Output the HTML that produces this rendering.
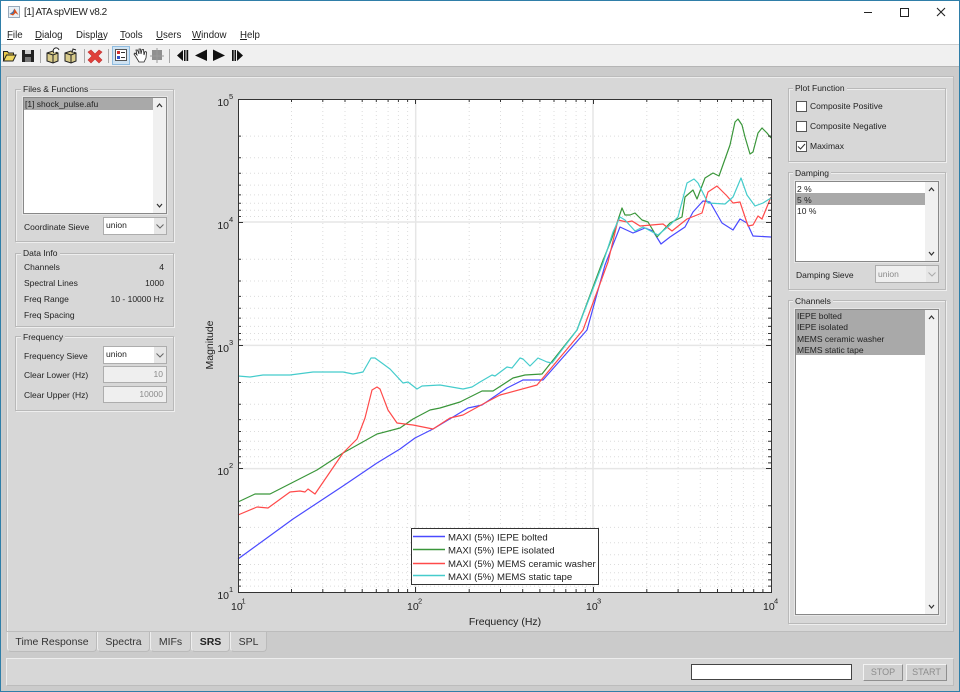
<!DOCTYPE html>
<html lang="en"><head><meta charset="utf-8"><title>[1] ATA spVIEW v8.2</title>
<style>
html,body{margin:0;padding:0;background:#fff}
#w{position:relative;width:960px;height:692px;overflow:hidden;background:#cbcbcb;font:8.5px/11px "Liberation Sans",Arial,sans-serif;color:#222}
#w div,#w span.a{position:absolute;box-sizing:border-box}
.t{white-space:nowrap;position:absolute}
.p{background:#d7d7d7;border:1px solid #b9b9b9;box-shadow:inset 1px 1px 0 #eee,1px 1px 0 #eee}
.lg{position:absolute;background:#d7d7d7;padding:0 2px;white-space:nowrap;line-height:10px}
.box{background:#fff;border:1px solid #888;box-shadow:0 0 0 1px #e6e6e6}
.sb{background:#f0f0f0}
.sel{background:#a9a9a9}
.dis{background:#efefef;border:1px solid #adadad;color:#8a8a8a;text-align:right;padding-right:3px;line-height:14px}
.dd{background:#fff;border:1px solid #adadad;padding-left:2px;line-height:15px}
.arr{background:#e6e6e6}
.cb{background:#fff;border:1px solid #555;width:11px;height:11px}
.m{font-size:9.7px;line-height:12px;top:30px}
.tab{top:632px;height:20px;background:#d4d4d4;border:1px solid #bbb;border-top:0;border-left-color:#eee;border-radius:0 0 4px 4px;text-align:center;font-size:10.5px;line-height:20px;color:#333}
.btn{background:#d0d0d0;border:1px solid #8f8f8f;border-top-color:#f2f2f2;border-left-color:#f2f2f2;color:#8c8c8c;text-align:center;line-height:15px;font-size:9px}
</style></head><body>
<div id="w">
<!-- window chrome -->
<div style="left:0;top:0;width:960px;height:28px;background:#fff;border-top:1px solid #2f7ea8"></div>
<div style="left:0;top:28px;width:960px;height:16px;background:#fff"></div>
<div style="left:0;top:44px;width:960px;height:1px;background:#cfcfcf"></div>
<div style="left:0;top:45px;width:960px;height:21px;background:#f0f0f0"></div>
<div style="left:0;top:66px;width:960px;height:1px;background:#b5b5b5"></div>
<div style="left:0;top:1px;width:1px;height:691px;background:#2f7ea8"></div>
<div style="left:959px;top:1px;width:1px;height:691px;background:#2f7ea8"></div>
<div style="left:0;top:691px;width:960px;height:1px;background:#2f7ea8"></div>

<svg style="position:absolute;left:8px;top:6px" width="12" height="12" viewBox="0 0 12 12"><rect x=".5" y=".5" width="11" height="11" fill="#e8f0f6" stroke="#9ab"/><path d="M1.500 8L4.500 6L6.500 2.500L9 6.500L10.500 9L7.500 7L5 9.500Z" fill="#d9501e"/><path d="M1.500 8L4.500 6L6.500 2.500L5.500 7.500L3.500 8Z" fill="#3a78b5"/></svg>
<span class="t" style="left:24px;top:6px;font-size:10px;letter-spacing:-.45px;line-height:13px;color:#222">[1] ATA spVIEW v8.2</span>
<svg style="position:absolute;left:860px;top:0" width="100" height="24" viewBox="0 0 100 24" fill="none" stroke="#222"><path d="M4 12.500H12"/><rect x="40.500" y="8.500" width="8" height="8"/><path d="M77 8l8 8M85 8l-8 8" stroke-width="1.100"/></svg>

<span class="t m" style="left:7px"><u>F</u>ile</span>
<span class="t m" style="left:35px"><u>D</u>ialog</span>
<span class="t m" style="left:76px">Displ<u>a</u>y</span>
<span class="t m" style="left:120px"><u>T</u>ools</span>
<span class="t m" style="left:156px"><u>U</u>sers</span>
<span class="t m" style="left:192px"><u>W</u>indow</span>
<span class="t m" style="left:240px"><u>H</u>elp</span>

<!-- toolbar -->
<svg style="position:absolute;left:0;top:45px" width="260" height="21" viewBox="0 0 260 21">
<path d="M3.500 16V6.500h4l1 1.500h5v2" fill="#e8c84a" stroke="#222"/><path d="M3.500 16l3-6h9.500l-3 6z" fill="#f0d860" stroke="#222"/>
<rect x="22" y="5" width="12" height="12" fill="#222"/><rect x="25" y="5" width="6" height="4" fill="#ccc"/><rect x="25" y="12" width="6" height="5" fill="#777"/>
<path d="M40.500 4v14M84.500 4v14M108.500 4v14M169.500 4v14" stroke="#a8a8a8"/>
<path d="M47 8l6-2 5 2v8l-5 2-6-2z" fill="#d9cc8c" stroke="#222"/><path d="M47 8l6 2 5-2M53 10v8" fill="none" stroke="#222"/><path d="M54 8a3 3 0 1 1 5-3" fill="#fff" stroke="#222"/>
<path d="M65 8l6-2 5 2v8l-5 2-6-2z" fill="#d9cc8c" stroke="#222"/><path d="M65 8l6 2 5-2M71 10v8" fill="none" stroke="#222"/><path d="M72 8l1-4 3 1" fill="#fff" stroke="#222"/>
<path d="M91 5l4 4 4-4 3 2-4 4 4 4-3 3-4-4-4 4-3-3 4-4-4-4z" fill="#e0403a" stroke="#c03030" stroke-width=".6"/>
<rect x="112.500" y="1.500" width="17" height="18" fill="#cfe3f3" stroke="#8fbce0"/>
<rect x="115.500" y="4.500" width="11" height="11" fill="#fff" stroke="#555"/><rect x="117" y="6" width="3" height="3" fill="#d03030"/><rect x="117" y="11" width="3" height="3" fill="#3050c8"/><path d="M121 7.500h4M121 12.500h4" stroke="#333"/>
<path d="M136 12l-2-3 1-1 2 2-1-5 1.500 0 1.500 4V4h1.500l.5 5 1-4.500h1.500L144 10l1-3.500 1.500.5L146 13l-2 4h-5z" fill="#fff" stroke="#222" stroke-width=".8"/>
<rect x="152" y="5" width="10" height="10" fill="#909090"/><path d="M157 3v15M150 11h14" stroke="#9a9a9a"/>
<path d="M177 10.500l6-5.500v11z" fill="#111"/><rect x="184" y="5" width="1.500" height="11" fill="#111"/><rect x="186.500" y="5" width="1.700" height="11" fill="#111"/>
<path d="M195 10.500l12-6v11.500z" fill="#111"/><path d="M225 10.500l-12-6v11.500z" fill="#111"/>
<rect x="232" y="5" width="1.700" height="11" fill="#111"/><rect x="234.500" y="5" width="1.500" height="11" fill="#111"/><path d="M243 10.500l-6-5.500v11z" fill="#111"/>
</svg>

<!-- main panel -->
<div style="left:6px;top:76px;width:948px;height:556px;background:#d7d7d7;border:1px solid #bcbcbc;box-shadow:inset 1px 1px 0 #ededed"></div>

<!-- Files & Functions -->
<div class="p" style="left:15px;top:89px;width:159px;height:153px"></div>
<span class="lg" style="left:21px;top:84px">Files &amp; Functions</span>
<div class="box" style="left:23px;top:97px;width:144px;height:117px"></div>
<div class="sel" style="left:24px;top:98px;width:129px;height:12px"></div>
<span class="t" style="left:25px;top:99px">[1] shock_pulse.afu</span>
<div class="sb" style="left:153px;top:98px;width:13px;height:115px"></div>
<svg style="position:absolute;left:153px;top:98px" width="13" height="115" fill="none" stroke="#333" stroke-width="1.200"><path d="M4 9l2.500-3 2.500 3M4 106l2.500 3 2.500-3"/></svg>
<span class="t" style="left:24px;top:222px">Coordinate Sieve</span>
<div class="dd" style="left:103px;top:217px;width:64px;height:18px">union</div>
<div class="arr" style="left:154px;top:218px;width:12px;height:16px"></div>
<svg style="position:absolute;left:154px;top:218px" width="12" height="16" fill="none" stroke="#666"><path d="M2.500 6.500l3.500 3.500 3.500-3.500"/></svg>

<!-- Data Info -->
<div class="p" style="left:15px;top:253px;width:159px;height:74px"></div>
<span class="lg" style="left:21px;top:248px">Data Info</span>
<span class="t" style="left:24px;top:262px">Channels</span><span class="t" style="right:796px;top:262px">4</span>
<span class="t" style="left:24px;top:278px">Spectral Lines</span><span class="t" style="right:796px;top:278px">1000</span>
<span class="t" style="left:24px;top:294px">Freq Range</span><span class="t" style="right:796px;top:294px">10 - 10000 Hz</span>
<span class="t" style="left:24px;top:310px">Freq Spacing</span>

<!-- Frequency -->
<div class="p" style="left:15px;top:336px;width:159px;height:75px"></div>
<span class="lg" style="left:21px;top:332px">Frequency</span>
<span class="t" style="left:24px;top:351px">Frequency Sieve</span>
<div class="dd" style="left:103px;top:346px;width:64px;height:18px">union</div>
<div class="arr" style="left:154px;top:347px;width:12px;height:16px"></div>
<svg style="position:absolute;left:154px;top:347px" width="12" height="16" fill="none" stroke="#666"><path d="M2.500 6.500l3.500 3.500 3.500-3.500"/></svg>
<span class="t" style="left:24px;top:370px">Clear Lower (Hz)</span>
<div class="dis" style="left:103px;top:366px;width:64px;height:17px">10</div>
<span class="t" style="left:24px;top:390px">Clear Upper (Hz)</span>
<div class="dis" style="left:103px;top:386px;width:64px;height:17px">10000</div>

<!-- Plot -->
<svg style="position:absolute;left:0;top:0" width="960" height="692" viewBox="0 0 960 692" font-family="Liberation Sans,Arial,sans-serif" fill="#222">
<defs>
<g id="xm" stroke="#dcdcdc" stroke-dasharray="1 3" fill="none"><path d="M53.500 99V592M84.800 99V592M107 99V592M124.200 99V592M138.300 99V592M150.100 99V592M160.400 99V592M169.600 99V592"/></g>
<g id="ym" stroke="#dcdcdc" stroke-dasharray="1 3" fill="none"><path d="M238 37.100H771M238 58.800H771M238 74.200H771M238 86.100H771M238 95.900H771M238 104.200H771M238 111.300H771M238 117.500H771"/></g>
<path id="xt" d="M53.500 0v3M84.800 0v3M107 0v3M124.200 0v3M138.300 0v3M150.100 0v3M160.400 0v3M169.600 0v3" stroke="#333" fill="none"/>
<path id="yt" d="M0 37.100h3M0 58.800h3M0 74.200h3M0 86.100h3M0 95.900h3M0 104.200h3M0 111.300h3M0 117.500h3" stroke="#333" fill="none"/>
</defs>
<rect x="238" y="99" width="533" height="493" fill="#fff"/>
<use href="#xm" x="238"/><use href="#xm" x="415.700"/><use href="#xm" x="593.300"/>
<use href="#ym" y="99"/><use href="#ym" y="222.200"/><use href="#ym" y="345.400"/><use href="#ym" y="468.600"/>
<path d="M415.700 99V592M593 99V592M238 222H771M238 345.400H771M238 468.600H771" stroke="#e6e6e6" stroke-width="1.500" fill="none"/>

<g fill="none" stroke-width="1.200" stroke-linejoin="round">
<polyline stroke="#4a4aff" points="238,559 293,519 343,486 377,463 400,449 415,438 433,429 468,408 482,405 507,388 523,380 543,380 587,330 605,265 620,227 633,233 645,228 653,231 661,244 670,237 685,227 693,212 703,201 710,202 722,223 733,230 740,219 747,223 753,236 771,237"/>
<polyline stroke="#3a963a" points="238,502 255,494 270,494 317,470 343,453 377,434 400,428 413,419 430,410 440,408 460,402 482,391 493,391 513,378 525,375 542,374 577,330 602,263 612,238 622,208 625,215 630,215 635,213 642,220 648,222 657,237 670,223 682,217 685,197 693,190 697,199 705,178 713,173 719,176 730,145 735,122 738,119 742,125 745,137 750,154 753,152 758,133 762,128 767,133 771,138"/>
<polyline stroke="#ff4a4a" points="238,515 257,507 268,508 290,492 300,491 305,492 308,489 315,494 343,453 357,439 365,418 372,390 377,387 380,389 388,410 397,423 413,425 433,429 450,418 463,415 483,404 500,395 537,385 583,330 608,262 618,220 627,222 632,221 640,226 663,224 672,231 687,219 702,213 708,192 717,186 727,196 733,203 740,202 748,226 753,225 758,216 762,219 771,197"/>
<polyline stroke="#45cccc" points="238,376 250,377 263,375 290,375 313,372 343,372 353,374 363,372 371,358 375,358 390,369 403,383 408,382 417,389 422,386 440,385 463,389 472,387 480,382 492,375 495,376 507,367 512,368 520,358 523,359 530,366 538,358 547,362 552,363 577,330 603,263 613,232 620,217 625,220 635,231 643,227 658,235 670,225 678,217 687,183 694,179 698,183 708,203 725,204 733,197 741,178 747,195 755,206 763,203 771,198"/>
</g>

<use href="#xt" x="238" y="99"/><use href="#xt" x="415.700" y="99"/><use href="#xt" x="593.300" y="99"/>
<use href="#xt" x="238" y="589"/><use href="#xt" x="415.700" y="589"/><use href="#xt" x="593.300" y="589"/>
<use href="#yt" x="238" y="99"/><use href="#yt" x="238" y="222.200"/><use href="#yt" x="238" y="345.400"/><use href="#yt" x="238" y="468.600"/>
<use href="#yt" x="768" y="99"/><use href="#yt" x="768" y="222.200"/><use href="#yt" x="768" y="345.400"/><use href="#yt" x="768" y="468.600"/>
<path d="M415.500 99v5M593.500 99v5M415.500 592v-5M593.500 592v-5M238 222.500h5M238 345.500h5M238 468.500h5M771 222.500h-5M771 345.500h-5M771 468.500h-5" stroke="#333" fill="none"/>
<rect x="238.500" y="99.500" width="533" height="493" fill="none" stroke="#333"/>

<g font-size="10.500" text-anchor="end">
<text x="229" y="106">10</text><text x="229" y="229">10</text><text x="229" y="352">10</text><text x="229" y="475">10</text><text x="229" y="599">10</text>
</g>
<g font-size="7.500">
<text x="229" y="99">5</text><text x="229" y="222">4</text><text x="229" y="345">3</text><text x="229" y="468">2</text><text x="229" y="592">1</text>
</g>
<g font-size="10.500">
<text x="231" y="610">10</text><text x="407" y="610">10</text><text x="586" y="610">10</text><text x="763" y="610">10</text>
</g>
<g font-size="7.500">
<text x="241.500" y="603.500">1</text><text x="418" y="603.500">2</text><text x="597" y="603.500">3</text><text x="774" y="603.500">4</text>
</g>
<text x="505" y="625" font-size="10.500" text-anchor="middle">Frequency (Hz)</text>
<text transform="translate(213 345) rotate(-90)" font-size="10.500" text-anchor="middle">Magnitude</text>

<rect x="411.500" y="528.500" width="187" height="56" fill="#fff" stroke="#333"/>
<g stroke-width="1.500">
<path d="M413 536.500H445" stroke="#4a4aff"/><path d="M413 549.500H445" stroke="#3a963a"/><path d="M413 563.500H445" stroke="#ff4a4a"/><path d="M413 575.500H445" stroke="#45cccc"/>
</g>
<g font-size="9.600">
<text x="448" y="540.500">MAXI (5%) IEPE bolted</text>
<text x="448" y="553.500">MAXI (5%) IEPE isolated</text>
<text x="448" y="567">MAXI (5%) MEMS ceramic washer</text>
<text x="448" y="580">MAXI (5%) MEMS static tape</text>
</g>
</svg>

<!-- Plot Function -->
<div class="p" style="left:788px;top:88px;width:158px;height:74px"></div>
<span class="lg" style="left:793px;top:83px">Plot Function</span>
<div class="cb" style="left:796px;top:101px"></div><span class="t" style="left:810px;top:101px">Composite Positive</span>
<div class="cb" style="left:796px;top:121px"></div><span class="t" style="left:810px;top:121px">Composite Negative</span>
<div class="cb" style="left:796px;top:141px"></div><span class="t" style="left:810px;top:141px">Maximax</span>
<svg style="position:absolute;left:796px;top:141px" width="11" height="11" fill="none" stroke="#333"><path d="M2 5.500l2.500 2.500 4.500-5"/></svg>

<!-- Damping -->
<div class="p" style="left:788px;top:172px;width:158px;height:118px"></div>
<span class="lg" style="left:793px;top:168px">Damping</span>
<div class="box" style="left:795px;top:181px;width:144px;height:81px"></div>
<div class="sel" style="left:796px;top:193px;width:129px;height:12px"></div>
<span class="t" style="left:797px;top:184px">2 %</span><span class="t" style="left:797px;top:195px">5 %</span><span class="t" style="left:797px;top:206px">10 %</span>
<div class="sb" style="left:925px;top:182px;width:13px;height:79px"></div>
<svg style="position:absolute;left:925px;top:182px" width="13" height="79" fill="none" stroke="#333" stroke-width="1.200"><path d="M4 9l2.500-3 2.500 3M4 70l2.500 3 2.500-3"/></svg>
<span class="t" style="left:796px;top:270px">Damping Sieve</span>
<div class="dis" style="left:875px;top:265px;width:64px;height:18px;text-align:left;padding:0 0 0 2px;line-height:16px">union</div>
<div class="arr" style="left:926px;top:266px;width:12px;height:16px"></div>
<svg style="position:absolute;left:926px;top:266px" width="12" height="16" fill="none" stroke="#aaa"><path d="M2.500 6.500l3.500 3.500 3.500-3.500"/></svg>

<!-- Channels -->
<div class="p" style="left:788px;top:300px;width:158px;height:324px"></div>
<span class="lg" style="left:793px;top:296px">Channels</span>
<div class="box" style="left:795px;top:309px;width:144px;height:306px"></div>
<div class="sel" style="left:796px;top:310px;width:129px;height:45px"></div>
<span class="t" style="left:797px;top:311px">IEPE bolted</span><span class="t" style="left:797px;top:322px">IEPE isolated</span><span class="t" style="left:797px;top:334px">MEMS ceramic washer</span><span class="t" style="left:797px;top:345px">MEMS static tape</span>
<div class="sb" style="left:925px;top:310px;width:13px;height:304px"></div>
<svg style="position:absolute;left:925px;top:310px" width="13" height="304" fill="none" stroke="#333" stroke-width="1.200"><path d="M4 9l2.500-3 2.500 3M4 295l2.500 3 2.500-3"/></svg>

<!-- Tabs -->
<div class="tab" style="left:7px;width:90px">Time Response</div>
<div class="tab" style="left:97px;width:53px">Spectra</div>
<div class="tab" style="left:150px;width:41px">MIFs</div>
<div class="tab" style="left:191px;width:39px;background:#d9d9d9;font-weight:bold;color:#222">SRS</div>
<div class="tab" style="left:230px;width:37px">SPL</div>

<!-- Status -->
<div style="left:6px;top:658px;width:948px;height:28px;background:#d7d7d7;border:1px solid #bcbcbc;border-top-color:#ededed;border-left-color:#ededed"></div>
<div style="left:691px;top:664px;width:161px;height:16px;background:#fff;border:1px solid #444"></div>
<div class="btn" style="left:863px;top:664px;width:40px;height:17px">STOP</div>
<div class="btn" style="left:906px;top:664px;width:41px;height:17px">START</div>
</div>
</body></html>
